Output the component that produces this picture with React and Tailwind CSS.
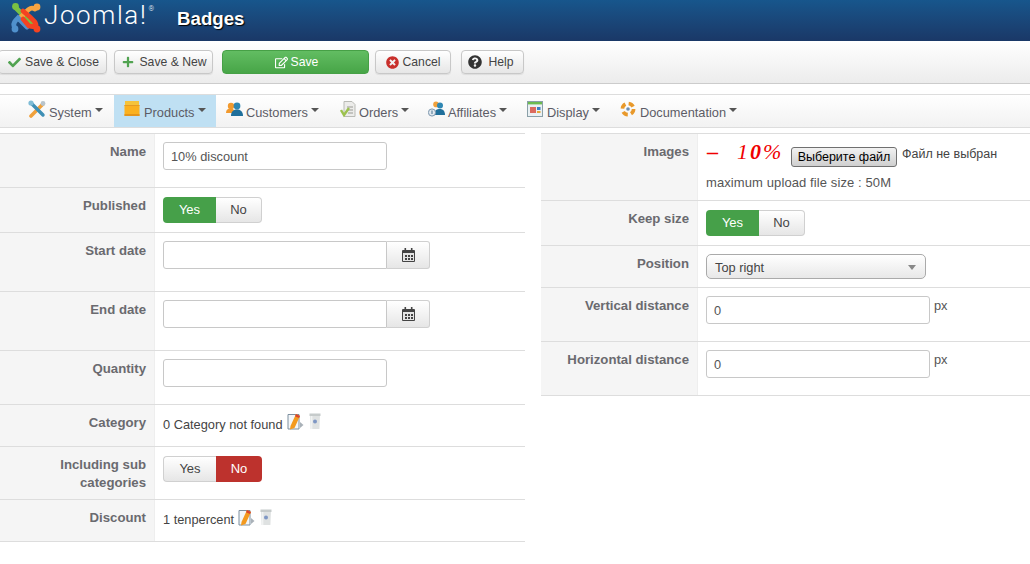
import React from "react";
import { FaCheck, FaPlus, FaRegEdit, FaTimesCircle, FaQuestionCircle } from "react-icons/fa";

const JoomlaLogo = () => (
  <svg width="32" height="32" viewBox="0 0 32 32" fill="none" strokeLinecap="round" strokeWidth="4.8">
    <path d="M6 6 L16 16 L21 21" stroke="#7ac143" />
    <circle cx="5.5" cy="4.5" r="3.4" fill="#7ac143" />
    <path d="M25 7 C21 5 19 7 16 10 L9 17" stroke="#f9a541" />
    <circle cx="27" cy="5" r="3.4" fill="#f9a541" />
    <path d="M4 24 C3 21 5 19 8 16 L13 21 L17 25" stroke="#5091cd" />
    <circle cx="5" cy="27" r="3.4" fill="#5091cd" />
    <path d="M13 9 L20 15 C24 19 27 21 26 25 L19 24 L13 17" stroke="#f44321" />
    <circle cx="27" cy="27" r="3.4" fill="#f44321" />
  </svg>
);

const ToolIcon = () => (
  <svg width="18" height="18" viewBox="0 0 18 18">
    <path d="M3 16 L15 4" stroke="#f0a13c" strokeWidth="3.6" strokeLinecap="round" />
    <path d="M3 3 L15 15" stroke="#3e8fb5" strokeWidth="3.4" strokeLinecap="round" />
    <circle cx="3" cy="3" r="2.6" fill="#7fbcd6" />
    <circle cx="15" cy="3.5" r="2.4" fill="#b8c4cc" />
  </svg>
);
const BoxIcon = () => (
  <svg width="16" height="18" viewBox="0 0 16 18">
    <rect x="1" y="1" width="14" height="4" fill="#f5c33b" />
    <rect x="0.5" y="5" width="15" height="11" fill="#fbb11f" />
    <rect x="0.5" y="14" width="15" height="2" fill="#e5951a" />
    <rect x="0.5" y="5" width="15" height="1" fill="#e39b25" />
  </svg>
);
const CustomersIcon = () => (
  <svg width="18" height="17" viewBox="0 0 18 17">
    <circle cx="5" cy="5" r="3.2" fill="#f29a2e" />
    <path d="M0 12 C0 8 3 7.5 5 7.5 C7 7.5 9 9 9 12Z" fill="#f29a2e" />
    <circle cx="11" cy="5" r="3.4" fill="#2f87b3" />
    <path d="M5 15 C5 10 8 8.5 11 8.5 C14 8.5 17 10 17 15Z" fill="#1f6f9b" />
  </svg>
);
const OrdersIcon = () => (
  <svg width="16" height="17" viewBox="0 0 16 17">
    <path d="M4 0.5 H12 L15 3.5 V15.5 H4Z" fill="#ececea" stroke="#b9bab5" />
    <path d="M7 6 H13 M8 9 H13 M8 12 H13" stroke="#9a9a95" />
    <path d="M1 9 L4 14 L9 7" stroke="#9cc24e" strokeWidth="2.4" fill="none" />
  </svg>
);
const AffiliatesIcon = () => (
  <svg width="17" height="17" viewBox="0 0 17 17">
    <circle cx="8" cy="3.4" r="2.8" fill="#f0a13c" />
    <circle cx="12" cy="4.6" r="3" fill="#2f87b3" />
    <path d="M6 14 C6 9 9 8 12 8 C15 8 17 10 17 14Z" fill="#1f6f9b" />
    <circle cx="4" cy="11.5" r="3.6" fill="#dfe7ee" stroke="#7d97ad" />
    <path d="M4 9.5 V13" stroke="#47708f" />
  </svg>
);
const DisplayIcon = () => (
  <svg width="17" height="17" viewBox="0 0 17 17">
    <rect x="0.5" y="0.5" width="15" height="15" fill="#eaf0f3" stroke="#8aa0a8" />
    <rect x="1" y="1" width="14" height="2.4" fill="#6dbb4f" />
    <rect x="3" y="6" width="6" height="6" fill="#dc6a5e" />
    <rect x="10" y="6" width="3.5" height="3" fill="#3c7fc0" />
    <rect x="10" y="10" width="3.5" height="2" fill="#e5a73a" />
  </svg>
);
const DocIcon = () => (
  <svg width="16" height="16" viewBox="0 0 16 16">
    <circle cx="8" cy="8" r="5.6" fill="none" stroke="#e8992b" strokeWidth="3.6" strokeDasharray="5.4 3.4" />
    <circle cx="8" cy="8" r="1.8" fill="#6c8fb5" />
  </svg>
);
const CalendarIcon = () => (
  <svg width="13" height="14" viewBox="0 0 13 14">
    <rect x="0" y="2" width="13" height="12" rx="1" fill="#444" />
    <rect x="2.5" y="0" width="1.6" height="3" fill="#444" />
    <rect x="8.9" y="0" width="1.6" height="3" fill="#444" />
    <rect x="1" y="5" width="11" height="8" fill="#e4e4e4" />
    <path d="M3 7H5V9H3Z M6 7H8V9H6Z M9 7H11V9H9Z M3 10H5V12H3Z M6 10H8V12H6Z M9 10H11V12H9Z" fill="#444" />
  </svg>
);
const EditIcon = () => (
  <svg width="17" height="18" viewBox="0 0 17 18">
    <path d="M1 1.5 H12 V16 H1Z" fill="#f3f6f9" stroke="#7d8f9f" />
    <path d="M13 9 L16.5 12 L13 15Z" fill="#a9b1b8" />
    <path d="M3.5 13 L9 1 L13 3 L7.5 15 L3 16.5Z" fill="#f39a1f" />
    <path d="M9 1 L13 3 L12 5 L8 3.2Z" fill="#d9442f" />
  </svg>
);
const TrashIcon = () => (
  <svg width="12" height="17" viewBox="0 0 12 17">
    <path d="M1 1.5 H11 L10.4 16 H1.6Z" fill="#dfe2e2" />
    <rect x="0.5" y="0.5" width="11" height="2.5" fill="#c6cbcb" />
    <rect x="1.8" y="3" width="1.6" height="13" fill="#f1f3f3" />
    <circle cx="6" cy="8.5" r="2" fill="#7f97c4" />
  </svg>
);

const Caret = () => (
  <span className="ml-[3px] mb-[2px] inline-block h-0 w-0 border-x-[4px] border-t-[4px] border-x-transparent border-t-[#555]" />
);

const NavItem = ({ icon, label, w, active, iconW = "w-[20px]" }) => (
  <div className={`flex h-full items-center pl-[10px] ${w} ${active ? "bg-[#bfe0f3]" : ""}`}>
    <span className={`flex -translate-y-[2px] justify-start ${iconW}`}>{icon}</span>
    <span className="pt-[3px] text-[#5c5c66]">{label}</span>
    <Caret />
  </div>
);

const ToolButton = ({ icon, label, w, ml, gap = "gap-[4px]" }) => (
  <button className={`flex h-[24px] items-center justify-center rounded-[4px] border border-[#c8c8c8] bg-gradient-to-b from-white to-[#e6e6e6] text-[12.2px] text-[#444] shadow-[0_1px_1px_rgba(0,0,0,0.08)] ${gap} ${w} ${ml}`}>
    {icon}
    {label}
  </button>
);

const Toggle = ({ value }) => (
  <div className="mt-[1px] flex h-[26px] w-[99px] text-[13px]">
    <span className={`flex w-[53px] items-center justify-center rounded-l-[4px] ${value ? "bg-[#46a049] text-white" : "border border-r-0 border-[#d0d0d0] bg-gradient-to-b from-white to-[#e6e6e6] text-[#444]"}`}>Yes</span>
    <span className={`flex w-[46px] items-center justify-center rounded-r-[4px] ${!value ? "bg-[#bd322d] text-white" : "border border-l-0 border-[#d0d0d0] bg-gradient-to-b from-white to-[#e6e6e6] text-[#444]"}`}>No</span>
  </div>
);

const Row = ({ label, h, labelW, children, last }) => (
  <div className={`flex border-t border-[#dddddd] ${h} ${last ? "border-b" : ""}`}>
    <div className={`shrink-0 border-r border-[#eeeeee] bg-[#f5f5f5] pr-[8px] pt-[9px] text-right text-[13.2px] font-bold leading-[18px] text-[#6a6a6f] ${labelW}`}>
      {label}
    </div>
    <div className="min-w-0 flex-1 pl-[8px] pt-[8px] text-[12.8px] leading-[18px] text-[#555]">{children}</div>
  </div>
);

const TextInput = ({ value, w = "w-[224px]" }) => (
  <div className={`flex h-[28px] items-center rounded-[3px] border border-[#c8c8c8] bg-white pl-[7px] pt-[1px] text-[12.8px] text-[#555] ${w}`}>
    {value}
  </div>
);

const DateInput = () => (
  <div className="flex h-[28px] w-[267px]">
    <div className="h-full w-[224px] rounded-l-[3px] border border-[#c8c8c8] bg-white" />
    <div className="flex h-full w-[43px] items-center justify-center rounded-r-[3px] border border-l-0 border-[#d0d0d0] bg-gradient-to-b from-white to-[#e6e6e6]">
      <CalendarIcon />
    </div>
  </div>
);

export default function App() {
  return (
    <div className="h-[564px] w-[1030px] overflow-hidden bg-white font-['Liberation_Sans',Arial,sans-serif]">
      <header className="flex h-[41px] items-center bg-gradient-to-b from-[#17568c] to-[#1a3867]">
        <div className="ml-[10px] -mt-[5px]"><JoomlaLogo /></div>
        <div className="ml-[2px] flex h-[31px] w-[133px] -translate-y-[5px] items-start font-['Roboto',sans-serif] font-light leading-[31px] text-white">
          <span className="text-[26px] tracking-[1.6px]">Joomla!</span>
          <span className="ml-[1px] text-[7px] leading-[18px]">®</span>
        </div>
        <h1 className="-mt-[2px] text-[18.7px] font-bold text-white [text-shadow:1px_1px_1px_#000]">Badges</h1>
      </header>

      <div className="flex h-[43px] items-start border-b border-[#cccccc] bg-gradient-to-b from-white to-[#ececec] pt-[9px]">
        <ToolButton w="w-[109px]" ml="-ml-[2px]" label="Save & Close" icon={<FaCheck className="ml-[2px] text-[13px] text-[#51a351]" />} />
        <ToolButton w="w-[99px]" ml="ml-[7px]" gap="gap-[5px]" label="Save & New" icon={<FaPlus className="ml-[2px] text-[12px] text-[#51a351]" />} />
        <button className="ml-[9px] flex h-[24px] w-[147px] items-center justify-center gap-[3px] rounded-[4px] border border-[#46a046] bg-gradient-to-b from-[#62bd62] to-[#47a547] pl-[2px] text-[12.2px] text-white">
          <FaRegEdit className="text-[13px]" />
          Save
        </button>
        <ToolButton w="w-[76px]" ml="ml-[6px]" label="Cancel" icon={<FaTimesCircle className="text-[13px] text-[#c9302c]" />} />
        <ToolButton w="w-[63px]" ml="ml-[10px]" gap="gap-[6px]" label="Help" icon={<FaQuestionCircle className="-ml-[3px] text-[14px] text-[#333]" />} />
      </div>

      <nav className="mt-[10px] flex h-[34px] border-y border-[#dddddd] bg-gradient-to-b from-white to-[#f2f2f2] pl-[18px] text-[12.8px]">
        <NavItem w="w-[96px]" iconW="w-[21px]" label="System" icon={<ToolIcon />} />
        <NavItem w="w-[102px]" label="Products" icon={<BoxIcon />} active />
        <NavItem w="w-[114px]" label="Customers" icon={<CustomersIcon />} />
        <NavItem w="w-[88px]" iconW="w-[19px]" label="Orders" icon={<OrdersIcon />} />
        <NavItem w="w-[99px]" label="Affiliates" icon={<AffiliatesIcon />} />
        <NavItem w="w-[93px]" label="Display" icon={<DisplayIcon />} />
        <NavItem w="w-[130px]" label="Documentation" icon={<DocIcon />} />
      </nav>

      <main className="mt-[5px] flex items-start">
        <section className="w-[525px] shrink-0">
          <Row labelW="w-[155px]" h="h-[54px]" label="Name"><TextInput value="10% discount" /></Row>
          <Row labelW="w-[155px]" h="h-[45px]" label="Published"><Toggle value /></Row>
          <Row labelW="w-[155px]" h="h-[59px]" label="Start date"><DateInput /></Row>
          <Row labelW="w-[155px]" h="h-[59px]" label="End date"><DateInput /></Row>
          <Row labelW="w-[155px]" h="h-[54px]" label="Quantity"><TextInput /></Row>
          <Row labelW="w-[155px]" h="h-[42px]" label="Category">
            <div className="flex items-start pt-[1px]">
              <span className="pt-[2px] text-[#444]">0 Category not found</span>
              <span className="ml-[4px] -mt-[1px]"><EditIcon /></span>
              <span className="ml-[5px] -mt-[1px]"><TrashIcon /></span>
            </div>
          </Row>
          <Row labelW="w-[155px]" h="h-[53px]" label={<>Including sub<br />categories</>}><Toggle value={false} /></Row>
          <Row labelW="w-[155px]" h="h-[43px]" last label="Discount">
            <div className="flex items-start pt-[2px]">
              <span className="pt-[1px] text-[#444]">1 tenpercent</span>
              <span className="ml-[4px] -mt-[1px]"><EditIcon /></span>
              <span className="ml-[5px] -mt-[1px]"><TrashIcon /></span>
            </div>
          </Row>
        </section>

        <section className="ml-[16px] flex-1">
          <Row labelW="w-[157px]" h="h-[67px]" label="Images">
            <div className="flex h-[30px] items-center">
              <span className="-mt-[10px] flex w-[85px] items-center font-['Liberation_Serif',serif] text-[22px] italic leading-none text-[#f00000]">
                <span className="ml-[1px] w-[30px] font-bold not-italic">–</span>
                <span className="tracking-[2px]">1<b>0</b>%</span>
              </span>
              <button className="h-[20px] w-[106px] rounded-[3px] border border-[#707070] bg-gradient-to-b from-[#f2f2f2] to-[#cfcfcf] text-[12.5px] leading-none text-black">Выберите файл</button>
              <span className="-mt-[6px] ml-[5px] text-[12.5px] text-[#444]">Файл не выбран</span>
            </div>
            <p className="mt-[2px] text-[13px] tracking-[0.1px] text-[#555]">maximum upload file size : 50M</p>
          </Row>
          <Row labelW="w-[157px]" h="h-[45px]" label="Keep size"><Toggle value /></Row>
          <Row labelW="w-[157px]" h="h-[42px]" label="Position">
            <div className="flex h-[25px] w-[220px] items-center justify-between rounded-[5px] border border-[#aaaaaa] bg-gradient-to-b from-white to-[#e8e8e8] pl-[8px] pr-[9px] pt-[2px] text-[12.8px] text-[#444]">
              Top right
              <span className="h-0 w-0 border-x-[4px] border-t-[5px] border-x-transparent border-t-[#888]" />
            </div>
          </Row>
          <Row labelW="w-[157px]" h="h-[54px]" label="Vertical distance">
            <div className="flex items-start">
              <TextInput value="0" />
              <span className="ml-[4px] pt-[1px] text-[#555]">px</span>
            </div>
          </Row>
          <Row labelW="w-[157px]" h="h-[55px]" last label="Horizontal distance">
            <div className="flex items-start">
              <TextInput value="0" />
              <span className="ml-[4px] pt-[1px] text-[#555]">px</span>
            </div>
          </Row>
        </section>
      </main>
    </div>
  );
}
